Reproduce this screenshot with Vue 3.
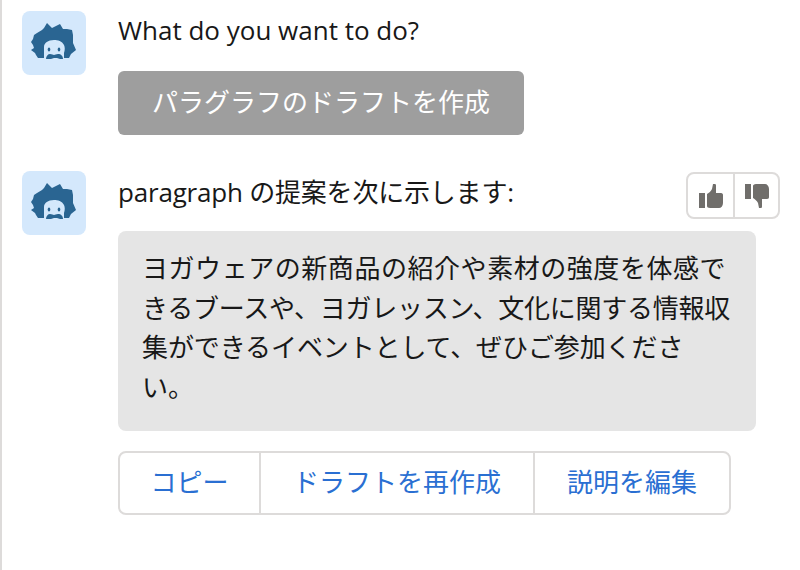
<template>
  <div class="chat">
    <div class="row first">
      <div class="avatar"><AvatarIcon /></div>
      <div class="body">
        <p class="line">What do you want to do?</p>
        <button class="action">パラグラフのドラフトを作成</button>
      </div>
    </div>

    <div class="row second">
      <div class="avatar"><AvatarIcon /></div>
      <div class="body">
        <div class="head">
          <p class="line">paragraph の提案を次に示します:</p>
          <div class="votes">
            <button class="vote">
              <svg width="24" height="24" viewBox="0 0 24 24"><path :d="thumb" fill="#706e6b"/></svg>
            </button>
            <button class="vote">
              <svg class="flip" width="24" height="24" viewBox="0 0 24 24"><path :d="thumb" fill="#706e6b"/></svg>
            </button>
          </div>
        </div>
        <div class="bubble">
          <span v-for="t in lines" :key="t.text" class="bubble-line" :style="{ letterSpacing: t.ls + 'px' }">{{ t.text }}</span>
        </div>
        <div class="group">
          <button v-for="b in buttons" :key="b.label" class="group-btn" :style="{ width: b.w + 'px' }">{{ b.label }}</button>
        </div>
      </div>
    </div>
  </div>
</template>

<script setup>
import { h } from 'vue';

const thumb = 'M0 9h6v15H0zM8 10c2-1 4-3 5-5l1-5h2c1 0 1 1 1 2v7h5c1.500 0 2 1 2 2v8c0 3-2 5-4 5H11c-2 0-3-1-3-2z';

const lines = [
  { text: 'ヨガウェアの新商品の紹介や素材の強度を体感で', ls: 0.55 },
  { text: 'きるブースや、ヨガレッスン、文化に関する情報収', ls: -0.25 },
  { text: '集ができるイベントとして、ぜひご参加くださ', ls: -0.1 },
  { text: 'い。', ls: 0 }
];
const buttons = [
  { label: 'コピー', w: 139 },
  { label: 'ドラフトを再作成', w: 274 },
  { label: '説明を編集', w: 196 }
];

// einstein face: hair blob with the face open at the bottom
const AvatarIcon = () => h('svg', { width: 64, height: 64, viewBox: '0 0 64 64' }, [
  h('path', {
    fill: '#2a6592',
    d: 'M25 12l5 5 8-4 3 5 4 0 5 1 1 5 0 3 0 5 3 7-5 4-2 4-5 0V42c1-3 1-6 0-8-2-4-6-5-10-5-6 0-10 3-10 7 0 3 0 7 0 11l-6 0-2-3-1-2-4-3 3-2-1-3-2-3 2-3 1-4 3-2 5-3 2-2z'
  }),
  h('ellipse', { cx: 27, cy: 38.500, rx: 1.300, ry: 2, fill: '#2a6592' }),
  h('ellipse', { cx: 37, cy: 38.500, rx: 1.300, ry: 2, fill: '#2a6592' }),
  h('path', {
    fill: '#2a6592',
    d: 'M24 48c0-3 2-5 4-5 2 0 3 1 4 1s2-1 4-1c3 0 5 2 5 5l-3 0-3-1-3 0-3 1-3 0z'
  })
]);
</script>

<style scoped>
.chat {
  width: 800px;
  height: 570px;
  box-sizing: border-box;
  border-left: 2px solid #dddbda;
  padding: 11px 0 0 20px;
  background: #fff;
  font-family: "Open Sans", "Noto Sans CJK JP", sans-serif;
  color: #181818;
  overflow: hidden;
}

.row {
  display: flex;
  gap: 32px;
}
.second {
  margin-top: 36px;
}

.avatar {
  width: 64px;
  height: 64px;
  flex-shrink: 0;
  border-radius: 8px;
  background: #d4e8fc;
}
.avatar svg {
  display: block;
}

.body {
  flex: 1;
  min-width: 0;
}

.line {
  margin: 0;
  font-size: 26px;
  line-height: 38px;
}
.head .line {
  margin-top: 2px;
  letter-spacing: -0.2px;
}

.action {
  display: block;
  width: 406px;
  height: 64px;
  margin-top: 22px;
  padding: 0 0 4px;
  border: none;
  border-radius: 6px;
  background: #9e9e9e;
  color: #fff;
  font: inherit;
  font-size: 26px;
}

.head {
  display: flex;
  justify-content: space-between;
  align-items: flex-start;
  padding-right: 20px;
}

.votes {
  display: flex;
  height: 47px;
  margin-top: 1px;
  box-sizing: border-box;
  border: 2px solid #dddbda;
  border-radius: 8px;
}

.vote {
  width: 45px;
  padding: 0;
  border: none;
  background: none;
  display: flex;
  align-items: center;
  justify-content: center;
}
.vote + .vote {
  border-left: 2px solid #dddbda;
}
.flip {
  transform: scaleY(-1);
}

.bubble {
  width: 638px;
  height: 200px;
  box-sizing: border-box;
  margin-top: 12px;
  padding: 18px 24px;
  border-radius: 8px;
  background: #e5e5e5;
  font-size: 26px;
  line-height: 39.500px;
}

.bubble-line {
  display: block;
  white-space: nowrap;
}

.group {
  display: inline-flex;
  margin-top: 20px;
  height: 64px;
  box-sizing: border-box;
  border: 2px solid #dddbda;
  border-radius: 8px;
}

.group-btn {
  padding: 0 0 4px;
  border: none;
  background: none;
  color: #2a6fd2;
  font: inherit;
  font-size: 26px;
}
.group-btn + .group-btn {
  border-left: 2px solid #dddbda;
}
</style>
